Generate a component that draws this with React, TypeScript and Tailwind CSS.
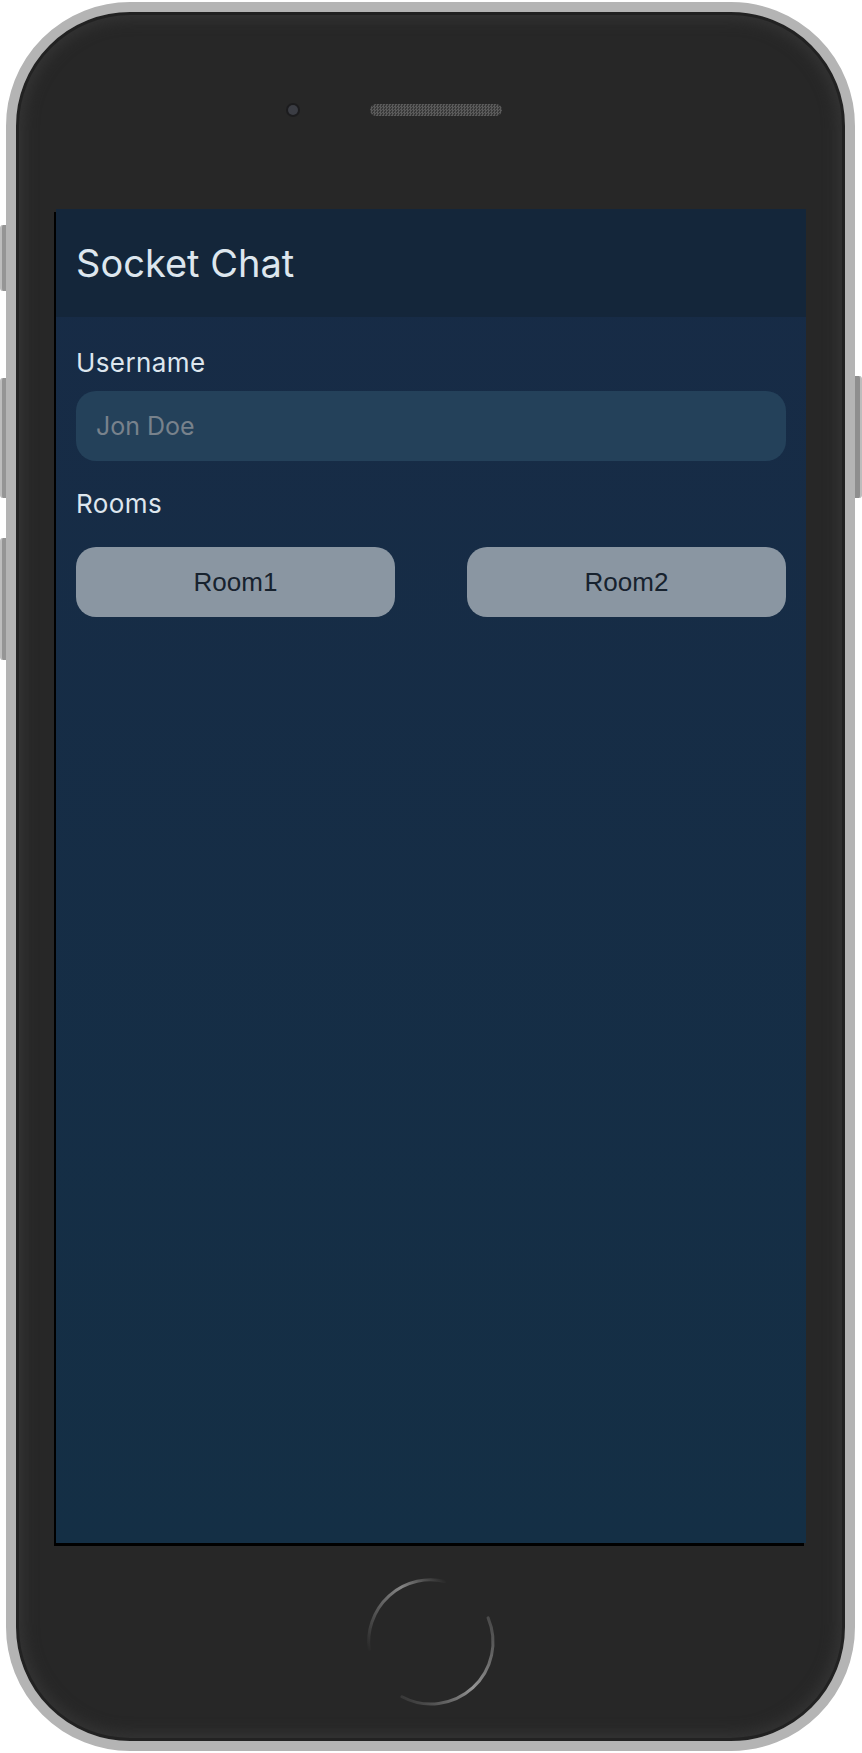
import { useState } from "react";

const rooms = ["Room1", "Room2"];

function HomeButton() {
  return (
    <svg width="140" height="140" viewBox="0 0 140 140">
      <defs>
        <linearGradient id="arcTop" gradientUnits="userSpaceOnUse" x1="84" y1="8" x2="8" y2="80">
          <stop offset="0" stopColor="#858585" stopOpacity="0" />
          <stop offset="0.35" stopColor="#858585" stopOpacity="1" />
          <stop offset="1" stopColor="#858585" stopOpacity="0" />
        </linearGradient>
        <linearGradient id="arcBottom" gradientUnits="userSpaceOnUse" x1="127" y1="46" x2="41" y2="125">
          <stop offset="0" stopColor="#808080" stopOpacity="0.4" />
          <stop offset="0.5" stopColor="#959595" stopOpacity="1" />
          <stop offset="1" stopColor="#808080" stopOpacity="0.2" />
        </linearGradient>
      </defs>
      <path d="M84 9.5 A62 62 0 0 0 8.2 78" fill="none" stroke="url(#arcTop)" strokeWidth="3" strokeLinecap="round" />
      <path d="M127.1 45.8 A62 62 0 0 1 40.9 124.7" fill="none" stroke="url(#arcBottom)" strokeWidth="3" strokeLinecap="round" />
    </svg>
  );
}

export default function App() {
  const [name, setName] = useState("");
  const [room, setRoom] = useState<string | null>(null);

  return (
    <div className="relative w-[862px] h-[1753px] bg-white overflow-hidden">
      {/* side buttons */}
      <div className="absolute left-0 top-[225px] h-[66px] w-[8px] rounded-l-[3px] bg-[#959595] border-l-2 border-[#bdbdbd]" />
      <div className="absolute left-0 top-[378px] h-[120px] w-[8px] rounded-l-[3px] bg-[#959595] border-l-2 border-[#bdbdbd]" />
      <div className="absolute left-0 top-[538px] h-[122px] w-[8px] rounded-l-[3px] bg-[#959595] border-l-2 border-[#bdbdbd]" />
      <div className="absolute right-0 top-[376px] h-[122px] w-[9px] rounded-r-[3px] bg-[#8e8e8e] border-r-2 border-[#bdbdbd]" />

      <div className="relative ml-[6px] mt-[2px] w-[849px] h-[1749px] rounded-[124px] border-[10px] border-[#b4b4b4] bg-[#272727] shadow-[inset_0_0_0_3px_#222,inset_0_0_14px_8px_#343434]">
        <div className="flex flex-col items-center">
          {/* camera + speaker */}
          <div className="h-[197px] w-full flex items-start">
            <div className="mt-[93px] ml-[272px] h-[10px] w-[10px] rounded-full bg-[#3b3d44] ring-2 ring-[#1c1c1e]" />
            <div className="mt-[92px] ml-[72px] h-[12px] w-[132px] rounded-full bg-[#4a4a4a] bg-[conic-gradient(#5a5a5a_25%,#383838_0_50%,#5a5a5a_0_75%,#383838_0)] bg-[length:3px_3px]" />
          </div>

          {/* screen */}
          <div className="ml-[1px] w-[750px] h-[1334px] flex flex-col bg-gradient-to-b from-[#172b46] to-[#142f45] shadow-[-2px_3px_0_#000] font-['Inter','Noto_Sans',sans-serif]">
            <div className="h-[108px] shrink-0 flex items-center px-[20px] bg-[#14263a]">
              <h1 className="text-[38px] leading-[48px] text-[#dde6ee]">Socket Chat</h1>
            </div>
            <div className="px-[20px] pt-[31px] flex flex-col">
              <label className="text-[26px] leading-[30px] tracking-[0.4px] text-[#dde6ee]">Username</label>
              <input
                value={name}
                onChange={(e) => setName(e.target.value)}
                placeholder="Jon Doe"
                className="mt-[13px] h-[70px] w-full rounded-[20px] bg-[#24415a] px-[20px] text-[25px] text-[#dde6ee] placeholder:text-[#78828c] outline-none"
              />
              <div className="mt-[28px] text-[26px] leading-[30px] tracking-[0.4px] text-[#dde6ee]">Rooms</div>
              <div className="mt-[28px] flex justify-between">
                {rooms.map((r) => (
                  <button
                    key={r}
                    onClick={() => setRoom(r)}
                    className={
                      "h-[70px] w-[319px] rounded-[20px] text-[26px] text-[#17222e] font-['Liberation_Sans',Arial,sans-serif] " +
                      (room === r ? "bg-[#9aa5b0]" : "bg-[#8a96a2]")
                    }
                  >
                    {r}
                  </button>
                ))}
              </div>
            </div>
          </div>

          {/* home button */}
          <div className="mt-[29px] ml-[1px]">
            <HomeButton />
          </div>
        </div>
      </div>
    </div>
  );
}
